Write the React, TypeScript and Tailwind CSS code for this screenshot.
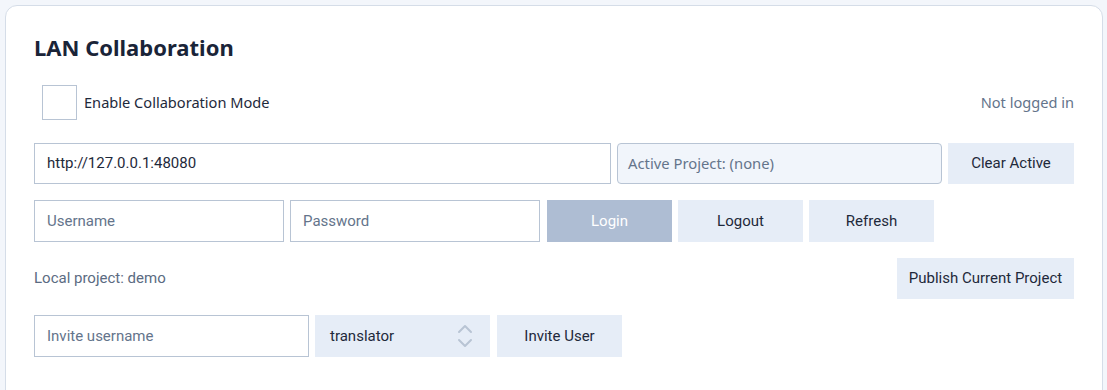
import React from "react";

const btn =
  "h-[41px] w-[125px] shrink-0 bg-[#e6edf7] text-[#1e293b] text-[15px] flex items-center justify-center";

export default function App() {
  return (
    <div className="w-[1107px] h-[390px] bg-[#f3f6fb] pt-[5px] pl-[5px] pr-[4px] overflow-hidden" style={{ fontFamily: "Roboto, sans-serif" }}>
      <div className="h-[400px] bg-white border border-[#d5dde8] rounded-[12px] px-[28px] pt-[27px]">
        <h1 className="text-[22px] font-bold text-[#1a2438] leading-[28px]" style={{ fontFamily: "'Noto Sans', sans-serif" }}>
          LAN Collaboration
        </h1>
        <div className="mt-[24px] flex items-center justify-between" style={{ fontFamily: "'Noto Sans', sans-serif" }}>
          <label className="flex items-center ml-[8px]">
            <span className="w-[35px] h-[35px] border border-[#b8c4d4] bg-white block" />
            <span className="ml-[7px] text-[14.6px] text-[#1e293b]">Enable Collaboration Mode</span>
          </label>
          <span className="text-[14.6px] text-[#64748b]">Not logged in</span>
        </div>
        <div className="mt-[23px] flex gap-[6px]">
          <div className="flex-1 h-[41px] border border-[#b8c4d4] flex items-center px-[12px] text-[15px] text-[#1e293b]">
            http://127.0.0.1:48080
          </div>
          <div className="w-[325px] shrink-0 h-[41px] border border-[#b8c4d4] bg-[#f1f5fb] rounded-[4px] flex items-center px-[10px] text-[14.8px] text-[#64748b]" style={{ fontFamily: "'Noto Sans', sans-serif" }}>
            Active Project: (none)
          </div>
          <div className={btn + " w-[126px]"}>Clear Active</div>
        </div>
        <div className="mt-[16px] flex h-[42px]">
          <div className="w-[250px] h-[42px] border border-[#b8c4d4] flex items-center px-[12px] text-[15px] text-[#64748b]">Username</div>
          <div className="ml-[6px] w-[250px] h-[42px] border border-[#b8c4d4] flex items-center px-[12px] text-[15px] text-[#64748b]">Password</div>
          <div className="ml-[7px] h-[42px] w-[125px] bg-[#aebdd3] text-white text-[15px] flex items-center justify-center">Login</div>
          <div className={btn + " h-[42px] ml-[6px]"}>Logout</div>
          <div className={btn + " h-[42px] ml-[6px]"}>Refresh</div>
        </div>
        <div className="mt-[16px] flex items-center justify-between">
          <span className="text-[15px] text-[#5b6b82]">Local project: demo</span>
          <div className="h-[41px] w-[177px] bg-[#e6edf7] text-[#1e293b] text-[15px] flex items-center justify-center">Publish Current Project</div>
        </div>
        <div className="mt-[16px] flex">
          <div className="w-[275px] h-[42px] border border-[#b8c4d4] flex items-center px-[12px] text-[15px] text-[#64748b]">Invite username</div>
          <div className="ml-[6px] w-[175px] h-[42px] bg-[#e6edf7] flex items-center justify-between pl-[15px] pr-[16px] text-[15px] text-[#1e293b]">
            <span>translator</span>
            <svg width="18" height="26" viewBox="0 0 18 26" fill="none" stroke="#b8c4d4" strokeWidth="2" strokeLinecap="round" strokeLinejoin="round">
              <path d="M3 9 L9 3 L15 9" />
              <path d="M3 17 L9 23 L15 17" />
            </svg>
          </div>
          <div className="ml-[7px] h-[42px] w-[125px] bg-[#e6edf7] text-[#1e293b] text-[15px] flex items-center justify-center">Invite User</div>
        </div>
      </div>
    </div>
  );
}
